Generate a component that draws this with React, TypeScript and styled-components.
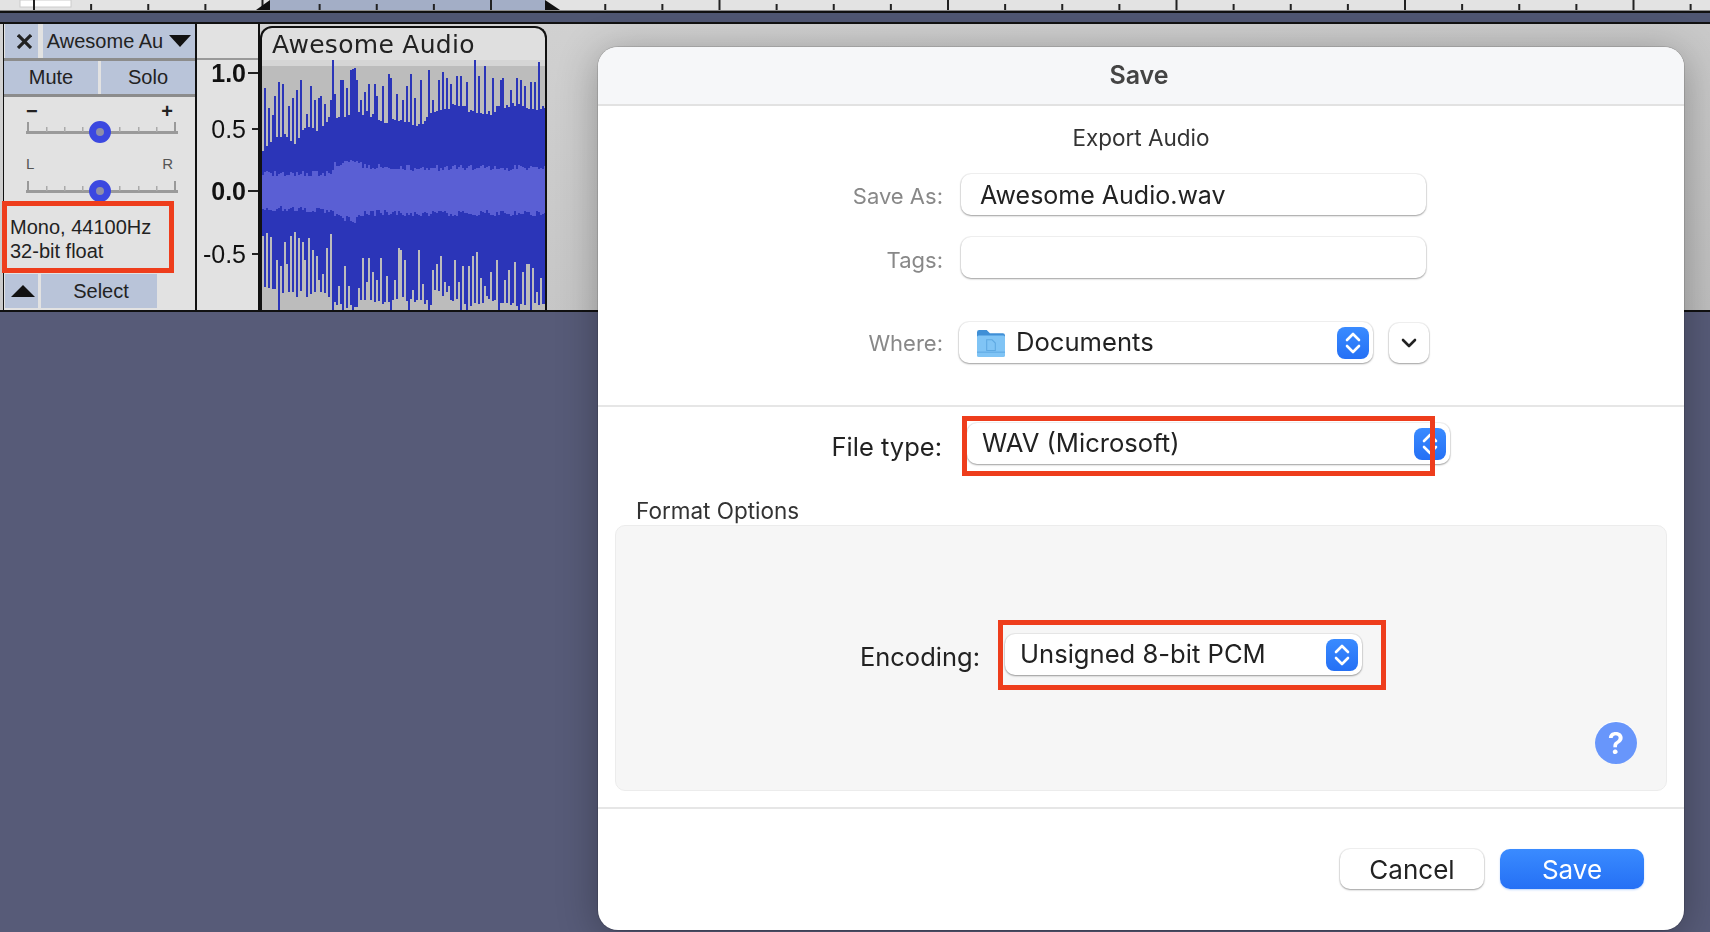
import React from 'react';
import styled, { createGlobalStyle } from 'styled-components';

const GlobalStyle = createGlobalStyle`
  html, body { margin: 0; padding: 0; background: #575b78; }
  * { box-sizing: border-box; }
`;

const Page = styled.div`
  position: relative;
  width: 1710px;
  height: 932px;
  overflow: hidden;
  display: flex;
  flex-direction: column;
  background: #575b78;
  font-family: Inter, "Liberation Sans", sans-serif;
`;

const RulerBar = styled.div`
  height: 13px;
  background: #e3e3e3;
  border-bottom: 2px solid #111;
  svg { display: block; }
`;

const Strip = styled.div`
  height: 9px;
  background: #4f5672;
`;

const TrackRow = styled.div`
  position: relative;
  height: 290px;
  border-top: 2px solid #111;
  border-bottom: 2px solid #111;
  background: linear-gradient(170deg, #d4d4d4 0%, #bfbfbf 100%);
`;

const TrackInner = styled.div`
  display: flex;
  height: 100%;
  margin-left: 3px;
  width: 544px;
  filter: blur(0.5px);
  font-family: "Liberation Sans", Arial, sans-serif;
  color: #222;
`;

const Controls = styled.div`
  width: 194px;
  flex: none;
  display: flex;
  flex-direction: column;
  background: #e2e2e2;
  border-left: 1px solid #111;
  border-right: 2px solid #111;
`;

const ButtonRow = styled.div<{ $height: number }>`
  display: flex;
  flex: none;
  height: ${p => p.$height}px;
  gap: 3px;
  border-bottom: 3px solid #8c8c8c;
`;

const TrackButton = styled.div<{ $width?: number; $left?: number; $inset?: number }>`
  display: flex;
  align-items: center;
  justify-content: center;
  gap: 6px;
  flex: ${p => (p.$width ? `0 0 ${p.$width}px` : '1')};
  margin-left: ${p => p.$left ?? 0}px;
  padding-left: ${p => p.$inset ?? 0}px;
  background: #b9c4d9;
  font-size: 20px;
  white-space: nowrap;
`;

const SliderGroup = styled.div<{ $top: number; $labelGap: number }>`
  padding: ${p => p.$top}px 22px 0;
  height: 52px;
  flex: none;
  svg { display: block; margin-top: ${p => p.$labelGap}px; }
`;

const SliderLabels = styled.div<{ $big?: boolean }>`
  display: flex;
  justify-content: space-between;
  height: 18px;
  line-height: 18px;
  font-size: ${p => (p.$big ? 20 : 15)}px;
  font-weight: ${p => (p.$big ? 700 : 400)};
  color: ${p => (p.$big ? '#222' : '#555')};
`;

const TrackInfo = styled.div`
  flex: 1;
  padding: 14px 0 0 6px;
  font-size: 20px;
  line-height: 24px;
`;

const BottomRow = styled.div`
  display: flex;
  flex: none;
  height: 36px;
  gap: 3px;
  padding-bottom: 2px;
`;

const ScaleColumn = styled.div`
  position: relative;
  width: 63px;
  flex: none;
  background: #e2e2e2;
  border-right: 2px solid #111;
`;

const ScaleTop = styled.div`
  height: 36px;
  border-bottom: 2px solid #999;
`;

const ScaleLabel = styled.div<{ $y: number; $bold?: boolean; $tick: number }>`
  position: absolute;
  top: ${p => p.$y}px;
  right: 12px;
  font-size: 25px;
  line-height: 26px;
  font-weight: ${p => (p.$bold ? 700 : 400)};
  color: #111;
  &::after {
    content: '';
    position: absolute;
    right: -12px;
    top: 12px;
    width: ${p => p.$tick}px;
    height: 2px;
    background: #222;
  }
`;

const WaveBox = styled.div`
  width: 287px;
  flex: none;
  display: flex;
  flex-direction: column;
  margin-top: 2px;
  border: 2px solid #111;
  border-bottom: none;
  border-radius: 12px 12px 0 0;
  overflow: hidden;
  background: #dfdfdf;
  svg { display: block; flex: none; }
`;

const WaveTitle = styled.div`
  height: 32px;
  flex: none;
  padding-left: 10px;
  font-family: "DejaVu Sans", sans-serif;
  font-size: 25px;
  line-height: 34px;
  letter-spacing: 0.3px;
  color: #222;
  white-space: nowrap;
`;

const RedBox = styled.div<{ $left: number; $top: number; $width: number; $height: number }>`
  position: absolute;
  left: ${p => p.$left}px;
  top: ${p => p.$top}px;
  width: ${p => p.$width}px;
  height: ${p => p.$height}px;
  border: 5px solid #ee3d1c;
  pointer-events: none;
`;

const Dialog = styled.div`
  position: absolute;
  left: 598px;
  top: 47px;
  width: 1086px;
  height: 883px;
  display: flex;
  flex-direction: column;
  background: #fff;
  border-radius: 20px;
  box-shadow: 0 0 0 1px rgba(0, 0, 0, 0.12), 0 6px 40px rgba(0, 0, 0, 0.3);
  overflow: hidden;
`;

const DialogHeader = styled.div`
  height: 59px;
  flex: none;
  display: flex;
  align-items: center;
  justify-content: center;
  padding: 0 4px 2px 0;
  background: #f6f7f9;
  border-bottom: 2px solid #e2e2e2;
  font-size: 25px;
  font-weight: 600;
  color: #444;
`;

const TopSection = styled.div`
  height: 301px;
  flex: none;
  padding-top: 17px;
  border-bottom: 2px solid #e6e6e6;
`;

const Subtitle = styled.div`
  height: 30px;
  margin-bottom: 21px;
  line-height: 30px;
  text-align: center;
  font-size: 22.5px;
  color: #333;
`;

const FormRow = styled.div<{ $after?: number }>`
  display: flex;
  align-items: center;
  margin-bottom: ${p => p.$after ?? 0}px;
`;

const FieldLabel = styled.div<{ $width: number; $gap: number; $strong?: boolean; $drop?: number }>`
  width: ${p => p.$width}px;
  margin-right: ${p => p.$gap}px;
  margin-top: ${p => p.$drop ?? 2}px;
  flex: none;
  text-align: right;
  font-size: ${p => (p.$strong ? 25.5 : 22)}px;
  color: ${p => (p.$strong ? '#222' : '#888')};
`;

const Field = styled.div<{ $width: number; $inset?: number; $small?: boolean }>`
  display: flex;
  align-items: center;
  width: ${p => p.$width}px;
  height: 41px;
  padding: 0 4px 0 ${p => p.$inset ?? 19}px;
  background: #fff;
  border-radius: 10px;
  box-shadow: 0 0 0 1px rgba(0, 0, 0, 0.05), 0 1px 2px rgba(0, 0, 0, 0.35);
  font-size: ${p => (p.$small ? 25 : 25.6)}px;
  color: #222;
  white-space: nowrap;
`;

const FieldText = styled.span`
  flex: 1;
  padding-bottom: 3px;
`;

const FolderIcon = styled.svg`
  flex: none;
  margin: 0 11px 0 -1px;
`;

const Stepper = styled.div`
  width: 32px;
  height: 32px;
  flex: none;
  display: flex;
  align-items: center;
  justify-content: center;
  border-radius: 8px;
  background: linear-gradient(#3a8bff, #2570f5);
`;

const ChevronButton = styled.div`
  width: 40px;
  height: 40px;
  margin-left: 16px;
  display: flex;
  align-items: center;
  justify-content: center;
  border-radius: 10px;
  background: #fff;
  box-shadow: 0 0 0 1px rgba(0, 0, 0, 0.05), 0 1px 2px rgba(0, 0, 0, 0.35);
`;

const MiddleSection = styled.div`
  height: 402px;
  flex: none;
  padding-top: 16px;
  border-bottom: 2px solid #e6e6e6;
`;

const GroupTitle = styled.div`
  margin: 32px 0 0 38px;
  height: 30px;
  line-height: 30px;
  font-size: 22.5px;
  color: #333;
`;

const OptionsPanel = styled.div`
  width: 1052px;
  height: 266px;
  margin: -1px 0 0 17px;
  padding-top: 108px;
  background: #f6f6f6;
  border: 1px solid #ececec;
  border-radius: 10px;
`;

const HelpRow = styled.div`
  display: flex;
  justify-content: flex-end;
  padding-right: 29px;
  margin-top: 47px;
`;

const HelpButton = styled.div`
  width: 42px;
  height: 42px;
  display: flex;
  align-items: center;
  justify-content: center;
  border-radius: 50%;
  background: #6896fb;
  box-shadow: 0 -1px 1px #fff;
  color: #fff;
  font-size: 30px;
  font-weight: 600;
`;

const Footer = styled.div`
  flex: 1;
  display: flex;
  justify-content: flex-end;
  gap: 16px;
  padding: 40px 40px 0 0;
`;

const FooterButton = styled.div<{ $primary?: boolean }>`
  width: 144px;
  height: 40px;
  display: flex;
  align-items: center;
  justify-content: center;
  border-radius: 10px;
  font-size: 26px;
  color: ${p => (p.$primary ? '#fff' : '#222')};
  background: ${p => (p.$primary ? 'linear-gradient(#3a8bff, #2570f5)' : '#fff')};
  box-shadow: ${p =>
    p.$primary
      ? '0 1px 2px rgba(37, 112, 245, 0.3)'
      : '0 0 0 1px rgba(0, 0, 0, 0.05), 0 1px 2px rgba(0, 0, 0, 0.35)'};
`;

// ruler ticks sit every 57.125px, each 4th one is a tall one
const rulerTicks = Array.from({ length: 30 }, (_, k) => ({ x: 33 + 57.125 * k, major: k % 4 === 0 }));

const Ruler = () => (
  <svg width="1710" height="11" viewBox="0 0 1710 11">
    <rect x="0" y="10" width="1710" height="1" fill="#888" />
    <rect x="270" y="0" width="275" height="10" fill="#a3aec6" />
    <rect x="20" y="0" width="51" height="7" fill="#fff" stroke="#ccc" />
    {rulerTicks.map(t => (
      <rect key={t.x} x={t.x} y={t.major ? 0 : 4} width="2" height={t.major ? 10 : 6} fill="#222" />
    ))}
    <polygon points="256,10 270,0 270,10" fill="#111" />
    <polygon points="545,0 560,10 545,10" fill="#111" />
  </svg>
);

const Slider = () => (
  <svg width="154" height="30" viewBox="0 0 154 30">
    <rect x="0" y="11" width="152" height="3" fill="#9a9a9a" />
    {[20, 38, 56, 93, 112, 130].map(x => (
      <rect key={x} x={x} y="7" width="1.5" height="5" fill="#aaa" />
    ))}
    <rect x="1" y="2" width="2" height="10" fill="#999" />
    <rect x="148" y="2" width="2" height="10" fill="#999" />
    <circle cx="74" cy="12" r="7.5" fill="#8f8fa8" stroke="#3b48e0" strokeWidth="7" />
  </svg>
);

const StepperIcon = () => (
  <Stepper>
    <svg width="20" height="24" viewBox="0 0 20 24" fill="none" stroke="#fff" strokeWidth="2.6" strokeLinecap="round" strokeLinejoin="round">
      <polyline points="4,9 10,3 16,9" />
      <polyline points="4,15 10,21 16,15" />
    </svg>
  </Stepper>
);

// tiny LCG so the wave stays the same on every render
let seed = 4211;
const rnd = () => {
  seed = (seed * 1103515245 + 12345) & 0x7fffffff;
  return seed / 0x7fffffff;
};

type Knot = [number, number];

const interp = (knots: Knot[], x: number) => {
  for (let i = 1; i < knots.length; i++) {
    if (x <= knots[i][0]) {
      const [x0, y0] = knots[i - 1];
      const [x1, y1] = knots[i];
      return y0 + ((y1 - y0) * (x - x0)) / (x1 - x0);
    }
  }
  return knots[knots.length - 1][1];
};

// [x, y] pairs read off the reference at 3x, top spikes of the blue wave
const topSpikes: Knot[] = [
  [45, 265], [57, 325], [69, 345], [75, 288], [87, 246], [99, 252], [117, 318], [129, 294], [141, 270], [153, 240],
  [171, 342], [183, 258], [195, 300], [207, 294], [213, 288], [225, 312], [243, 300], [249, 180], [255, 282], [273, 240],
  [279, 240], [291, 264], [303, 210], [309, 207], [315, 204], [321, 240], [333, 300], [345, 276], [357, 252], [375, 252],
  [381, 288], [399, 258], [417, 222], [423, 234], [441, 282], [459, 300], [471, 258], [483, 222], [495, 294], [513, 240],
  [537, 210], [549, 300], [567, 240], [579, 216], [591, 234], [603, 252], [621, 228], [633, 228], [651, 246], [675, 180],
  [687, 228], [705, 198], [729, 234], [753, 240], [759, 234], [783, 270], [801, 234], [813, 240], [825, 258], [843, 246],
  [855, 246], [867, 186], [879, 318],
];
const topBody: Knot[] = [
  [35, 440], [60, 415], [100, 400], [130, 430], [160, 370], [200, 390], [240, 340], [280, 350], [300, 330], [350, 330],
  [400, 360], [450, 350], [500, 370], [550, 330], [600, 310], [650, 320], [700, 340], [750, 310], [800, 310], [885, 320],
];
// same for the grey that reaches up from the bottom edge
const bottomSpikes: Knot[] = [
  [25, 258], [37, 248], [50, 260], [66, 330], [78, 348], [90, 276], [97, 342], [108, 258], [120, 246], [132, 264],
  [144, 276], [150, 330], [162, 264], [174, 300], [186, 318], [192, 390], [204, 372], [216, 294], [228, 252], [250, 408],
  [270, 348], [282, 408], [312, 414], [324, 324], [336, 396], [342, 324], [354, 366], [366, 390], [378, 324], [396, 378],
  [420, 390], [432, 294], [438, 300], [450, 330], [474, 420], [492, 300], [504, 402], [516, 450], [534, 360], [546, 342],
  [558, 318], [570, 396], [582, 408], [600, 330], [612, 396], [624, 348], [642, 348], [654, 318], [666, 306], [678, 384],
  [690, 408], [708, 366], [726, 330], [750, 390], [762, 360], [780, 336], [804, 366], [816, 342], [822, 342], [834, 354],
  [846, 426], [858, 384],
];
const bottomBars = [70, 235, 262, 296, 408, 462, 522, 618, 636, 732, 792, 828];
const bottomBase: Knot[] = [
  [20, 410], [60, 405], [120, 420], [230, 425], [240, 450], [300, 470], [320, 430], [400, 455], [420, 430], [460, 435],
  [480, 440], [520, 465], [540, 405], [600, 440], [650, 455], [700, 430], [740, 460], [790, 445], [860, 450],
];
const bandTop: Knot[] = [[20, 70], [225, 70], [235, 42], [300, 30], [320, 48], [500, 55], [650, 52], [870, 55]];
const bandBottom: Knot[] = [[20, 175], [225, 180], [235, 195], [295, 212], [320, 190], [500, 190], [870, 190]];

const buildWave = () => {
  const top = new Map(topSpikes.map(([x, y]) => [Math.floor((x - 36) / 6), y]));
  const bottom = new Map(bottomSpikes.map(([x, y]) => [Math.floor((x - 21) / 6), y]));
  const bars = new Set(bottomBars.map(x => Math.floor((x - 21) / 6)));
  let blue = '';
  let band = '';
  for (let i = 0; i < 142; i++) {
    const x = i * 2;
    const yTop = (top.get(i) ?? interp(topBody, 36 + i * 6) + rnd() * 16) / 3 - 60;
    const zoomX = 21 + i * 6;
    const grey = bars.has(i) ? 480 : bottom.get(i) ?? interp(bottomBase, zoomX) + rnd() * 20;
    const yBottom = 150 + grey / 3 - 60;
    blue += `M${x} ${yTop}H${x + 2}V${yBottom}H${x}Z`;
    const b0 = 150 + (interp(bandTop, zoomX) + rnd() * 18 - 9) / 3 - 60;
    const b1 = 150 + (interp(bandBottom, zoomX) + rnd() * 18 - 9) / 3 - 60;
    band += `M${x} ${b0}H${x + 2}V${b1}H${x}Z`;
  }
  return { blue, band };
};

const wave = buildWave();

const Waveform = () => (
  <svg width="283" height="250" viewBox="0 0 283 250">
    <rect width="283" height="250" fill="#bcbcbc" />
    <rect width="283" height="6" fill="#d5d5d5" />
    <path d={wave.blue} fill="#2b35b8" shapeRendering="crispEdges" />
    <path d={wave.band} fill="#5a5fd4" shapeRendering="crispEdges" />
  </svg>
);

export default function App() {
  return (
    <Page>
      <GlobalStyle />
      <RulerBar>
        <Ruler />
      </RulerBar>
      <Strip />
      <TrackRow>
        <TrackInner>
          <Controls>
            <ButtonRow $height={37}>
              <TrackButton $width={33} $left={1} $inset={5}>
                <svg width="15" height="15" viewBox="0 0 15 15" stroke="#222" strokeWidth="3.2">
                  <line x1="1" y1="1" x2="14" y2="14" />
                  <line x1="14" y1="1" x2="1" y2="14" />
                </svg>
              </TrackButton>
              <TrackButton $left={2}>
                Awesome Au
                <svg width="22" height="12" viewBox="0 0 22 12">
                  <polygon points="0,0 22,0 11,12" fill="#111" />
                </svg>
              </TrackButton>
            </ButtonRow>
            <ButtonRow $height={36}>
              <TrackButton>Mute</TrackButton>
              <TrackButton>Solo</TrackButton>
            </ButtonRow>
            <SliderGroup $top={5} $labelGap={0}>
              <SliderLabels $big>
                <span>−</span>
                <span>+</span>
              </SliderLabels>
              <Slider />
            </SliderGroup>
            <SliderGroup $top={6} $labelGap={6}>
              <SliderLabels>
                <span>L</span>
                <span>R</span>
              </SliderLabels>
              <Slider />
            </SliderGroup>
            <TrackInfo>
              Mono, 44100Hz
              <br />
              32-bit float
            </TrackInfo>
            <BottomRow>
              <TrackButton $width={33} $left={1} $inset={2}>
                <svg width="24" height="12" viewBox="0 0 24 12">
                  <polygon points="12,0 24,12 0,12" fill="#111" />
                </svg>
              </TrackButton>
              <TrackButton $width={116} $inset={4}>Select</TrackButton>
            </BottomRow>
          </Controls>
          <ScaleColumn>
            <ScaleTop />
            <ScaleLabel $y={36} $bold $tick={10}>1.0</ScaleLabel>
            <ScaleLabel $y={92} $tick={6}>0.5</ScaleLabel>
            <ScaleLabel $y={154} $bold $tick={10}>0.0</ScaleLabel>
            <ScaleLabel $y={217} $tick={6}>-0.5</ScaleLabel>
          </ScaleColumn>
          <WaveBox>
            <WaveTitle>Awesome Audio</WaveTitle>
            <Waveform />
          </WaveBox>
        </TrackInner>
        <RedBox $left={2} $top={177} $width={172} $height={72} />
      </TrackRow>

      <Dialog>
        <DialogHeader>Save</DialogHeader>
        <TopSection>
          <Subtitle>Export Audio</Subtitle>
          <FormRow $after={22}>
            <FieldLabel $width={345} $gap={18}>Save As:</FieldLabel>
            <Field $width={465} $small>Awesome Audio.wav</Field>
          </FormRow>
          <FormRow $after={44}>
            <FieldLabel $width={345} $gap={18} $drop={4}>Tags:</FieldLabel>
            <Field $width={465} />
          </FormRow>
          <FormRow>
            <FieldLabel $width={345} $gap={16} $drop={0}>Where:</FieldLabel>
            <Field $width={414}>
              <FolderIcon width="28" height="28" viewBox="1 1 26 26">
                <path d="M1 4a2 2 0 0 1 2-2h7l3 3h12a2 2 0 0 1 2 2v3H1z" fill="#3f8fd6" />
                <rect x="1" y="7" width="26" height="20" rx="1.5" fill="#80c4f5" />
                <rect x="1" y="22" width="26" height="1" fill="#5ea9e2" />
                <path d="M10 11h5l3 3v7h-8z" fill="none" stroke="#5ea9e2" />
              </FolderIcon>
              <FieldText>Documents</FieldText>
              <StepperIcon />
            </Field>
            <ChevronButton>
              <svg width="16" height="10" viewBox="0 0 16 10" fill="none" stroke="#222" strokeWidth="2.6" strokeLinecap="round" strokeLinejoin="round">
                <polyline points="2,2 8,8 14,2" />
              </svg>
            </ChevronButton>
          </FormRow>
        </TopSection>
        <MiddleSection>
          <FormRow>
            <FieldLabel $width={344} $gap={25} $strong $drop={6}>File type:</FieldLabel>
            <Field $width={483} $inset={15}>
              <FieldText>WAV (Microsoft)</FieldText>
              <StepperIcon />
            </Field>
          </FormRow>
          <GroupTitle>Format Options</GroupTitle>
          <OptionsPanel>
            <FormRow>
              <FieldLabel $width={364} $gap={25} $strong $drop={4}>Encoding:</FieldLabel>
              <Field $width={357} $inset={15}>
                <FieldText>Unsigned 8-bit PCM</FieldText>
                <StepperIcon />
              </Field>
            </FormRow>
            <HelpRow>
              <HelpButton>?</HelpButton>
            </HelpRow>
          </OptionsPanel>
        </MiddleSection>
        <Footer>
          <FooterButton>Cancel</FooterButton>
          <FooterButton $primary>Save</FooterButton>
        </Footer>
        <RedBox $left={364} $top={369} $width={473} $height={60} />
        <RedBox $left={400} $top={573} $width={388} $height={70} />
      </Dialog>
    </Page>
  );
}
